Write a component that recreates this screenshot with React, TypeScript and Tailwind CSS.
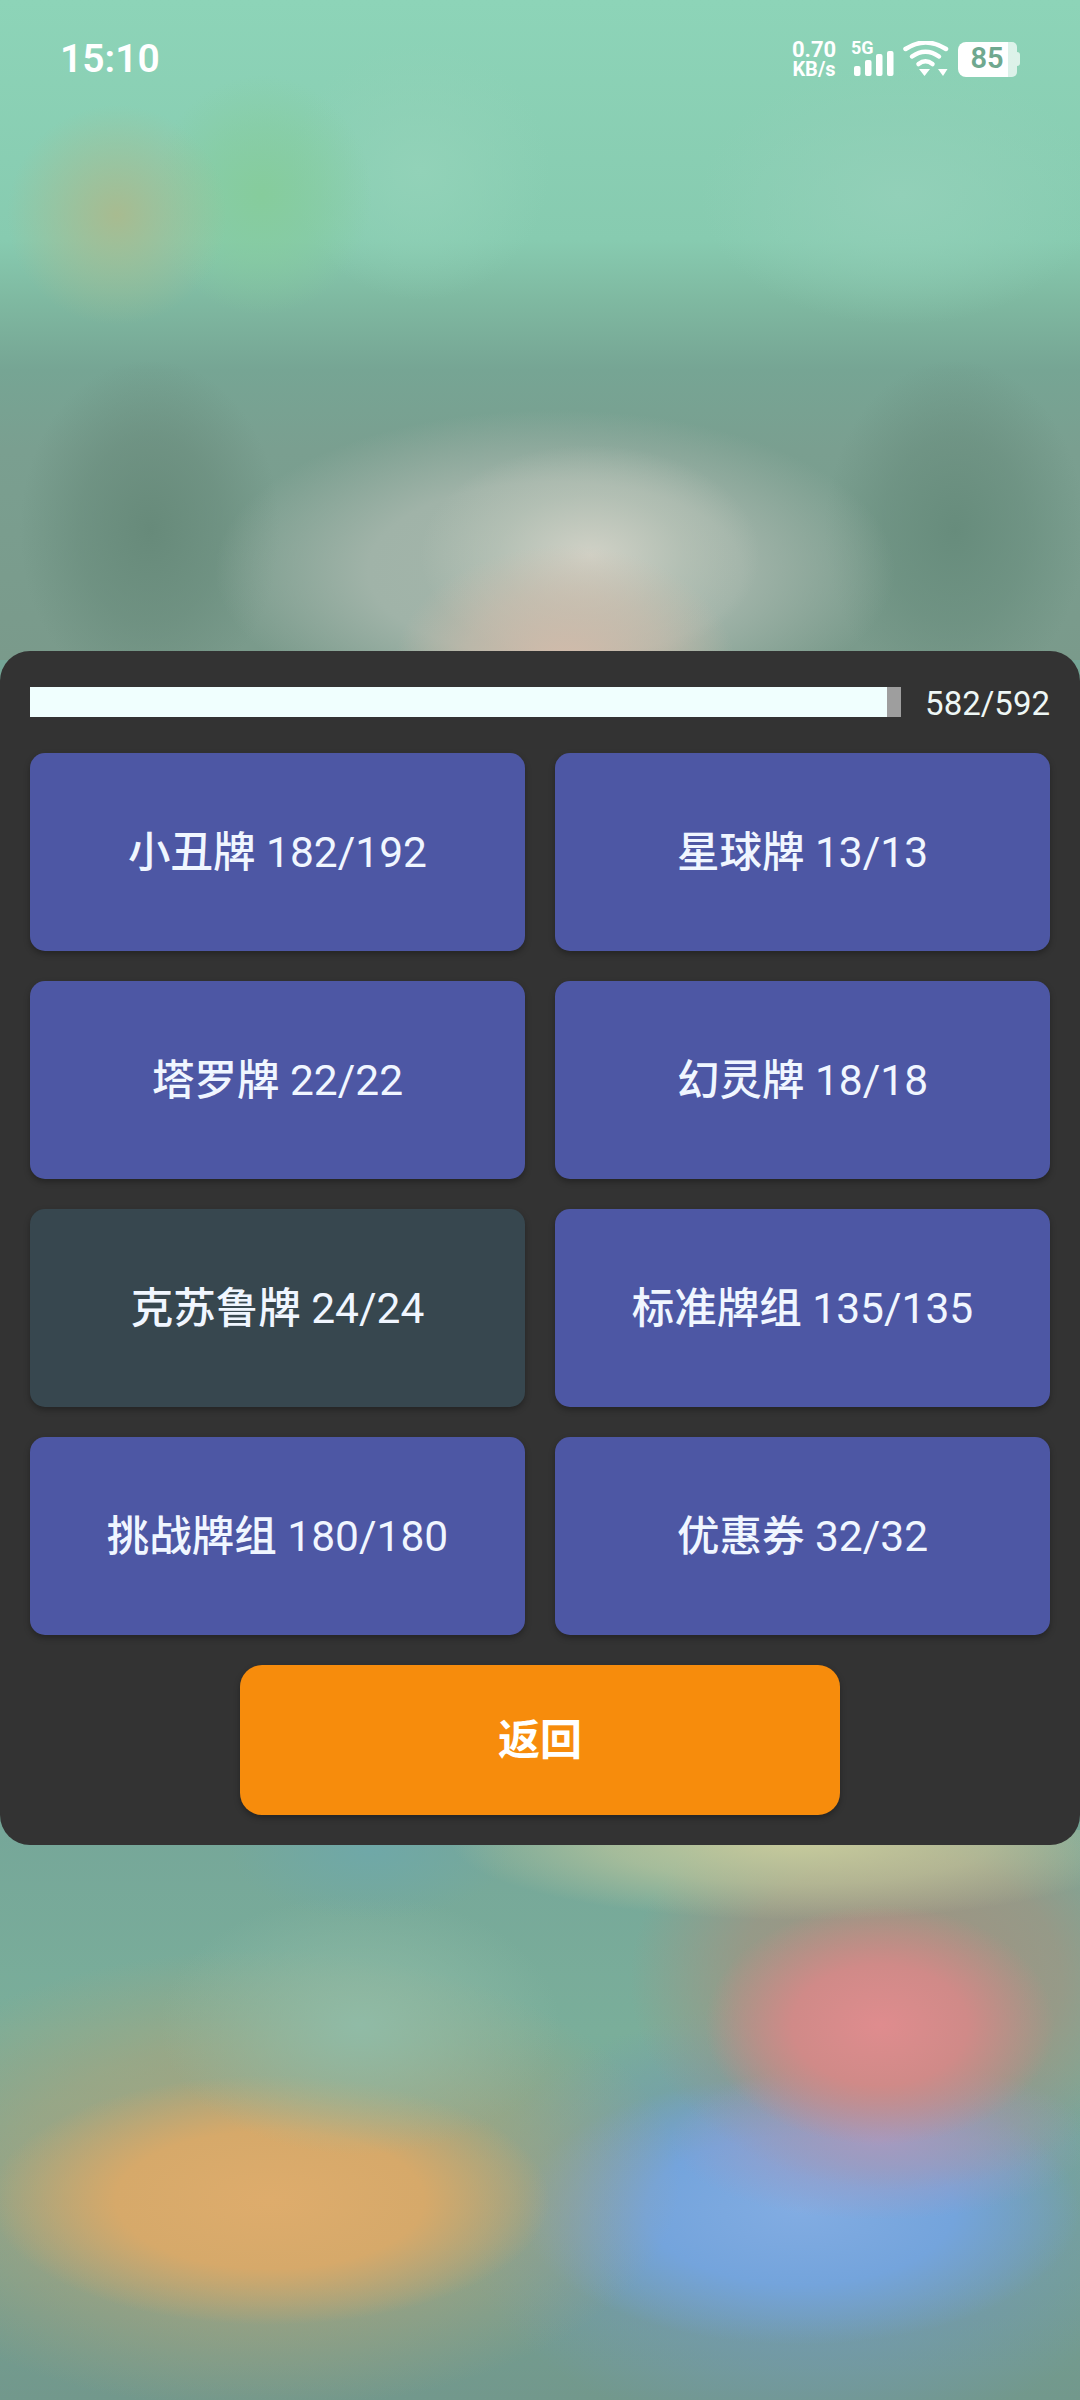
import React from 'react';

const decks = [
  { label: '小丑牌 182/192', dark: false },
  { label: '星球牌 13/13', dark: false },
  { label: '塔罗牌 22/22', dark: false },
  { label: '幻灵牌 18/18', dark: false },
  { label: '克苏鲁牌 24/24', dark: true },
  { label: '标准牌组 135/135', dark: false },
  { label: '挑战牌组 180/180', dark: false },
  { label: '优惠券 32/32', dark: false },
];

const StatusIcons = () => (
  <div className="flex items-center text-white h-[36px]">
    <div className="flex flex-col items-center w-[46px] font-bold">
      <span className="text-[22px] leading-[20px]">0.70</span>
      <span className="text-[20px] leading-[18px]">KB/s</span>
    </div>
    <div className="relative ml-[15px] w-[42px] h-[36px]">
      <span className="absolute -left-[1px] -top-[3px] text-[18px] leading-[20px] font-bold">5G</span>
      <svg className="absolute left-0 top-0" width="42" height="36" viewBox="0 0 42 36" fill="white">
        <rect x="2" y="25" width="6.5" height="10" rx="2" />
        <rect x="13" y="19" width="6.5" height="16" rx="2" />
        <rect x="24" y="13" width="6.5" height="22" rx="2" />
        <rect x="35" y="10" width="6.5" height="25" rx="2" />
      </svg>
    </div>
    <svg className="ml-[9px]" width="46" height="36" viewBox="0 0 46 36" fill="none" stroke="white" strokeWidth="4.5" strokeLinecap="round">
      <path d="M2.5 8 Q22.5 -5 43 8" />
      <path d="M9 15.5 Q22.5 6 36 15.5" />
      <path d="M15.5 23 Q22.5 17.5 29.5 23" />
      <path d="M16 28 H27 L21.5 35 Z" fill="white" stroke="none" />
      <path d="M35 28 H44.5 L40 35 Z" fill="white" stroke="none" />
    </svg>
    <div className="ml-[9px] flex items-center">
      <div className="w-[50px] h-[35px] rounded-l-[8px] bg-white flex items-center justify-center pl-[8px] text-[#6fa88f] text-[29px] font-semibold">
        85
      </div>
      <div className="w-[9px] h-[35px] rounded-r-[5px] bg-white/70" />
      <div className="w-[3px] h-[14px] bg-white/70 rounded-r-sm" />
    </div>
  </div>
);

export default function App() {
  return (
    <div className="relative w-[1080px] h-[2400px] overflow-hidden bg-[#74a596] font-['Roboto','Noto_Sans_CJK_SC',sans-serif]">
      {/* blurred wallpaper, top half and bottom half */}
      <div className="absolute inset-x-0 top-0 h-[660px] bg-[radial-gradient(ellipse_170px_120px_at_565px_665px,#d3bbaa_0%,#d3bbaa80_60%,transparent_100%),radial-gradient(ellipse_170px_110px_at_590px_555px,#d0d1c6_0%,#c0c8bc90_55%,transparent_100%),radial-gradient(ellipse_340px_160px_at_555px_570px,#a5b6ab_0%,#a0b3a8_55%,transparent_100%),radial-gradient(ellipse_130px_170px_at_150px_530px,#678a7a_0%,#678a7a90_55%,transparent_100%),radial-gradient(ellipse_130px_170px_at_955px_530px,#678c7c_0%,#678c7c90_55%,transparent_100%),radial-gradient(ellipse_110px_110px_at_117px_215px,#a8bb90_0%,#a8bb9070_55%,transparent_100%),radial-gradient(ellipse_110px_120px_at_262px_195px,#86cc9c_0%,#86cc9c80_55%,transparent_100%),radial-gradient(ellipse_130px_130px_at_420px_170px,#92d2b8_0%,transparent_100%),radial-gradient(ellipse_200px_130px_at_900px_195px,#92d0b8_0%,transparent_100%),linear-gradient(180deg,#8dd4b8_0px,#87cbb0_240px,#7fb9a1_300px,#76a594_370px,#7a9f90_450px,#7a9a8b_660px)]" />
      <div className="absolute inset-x-0 top-[1830px] bottom-0 bg-[radial-gradient(ellipse_350px_80px_at_800px_10px,#c8cb9c_0%,#c8cb9c90_55%,transparent_100%),radial-gradient(ellipse_140px_70px_at_370px_20px,#6fa8a8_0%,transparent_100%),radial-gradient(ellipse_175px_120px_at_880px_195px,#df8c8e_0%,#d08a88_50%,transparent_100%),radial-gradient(ellipse_210px_80px_at_880px_310px,#a59ac0_0%,transparent_100%),radial-gradient(ellipse_270px_210px_at_900px_150px,#a39280_0%,#a39280b0_60%,transparent_100%),radial-gradient(ellipse_200px_130px_at_360px_195px,#90bba6_0%,transparent_100%),radial-gradient(ellipse_280px_125px_at_270px_370px,#deac6c_0%,#d6a96a_55%,transparent_100%),radial-gradient(ellipse_420px_230px_at_260px_350px,#aea47a_0%,#aea47a90_60%,transparent_100%),radial-gradient(ellipse_280px_135px_at_800px_380px,#82ace2_0%,#74a4dc_55%,transparent_100%),radial-gradient(ellipse_350px_220px_at_810px_390px,#7299b8_0%,#7299b890_60%,transparent_100%),linear-gradient(180deg,#76a799_0px,#7aae9a_200px,#76a294_400px,#72988c_570px)]" />

      <div className="relative flex flex-col h-full">
        <div className="h-[651px] shrink-0">
          <div className="flex items-center justify-between pl-[60px] pr-[60px] pt-[41px]">
            <span className="text-white text-[39px] font-semibold leading-[36px]">15:10</span>
            <StatusIcons />
          </div>
        </div>

        <div className="h-[1194px] bg-[#333333] rounded-[30px] p-[30px] flex flex-col">
          <div className="flex items-center h-[30px] mt-[6px]">
            <div className="w-[872px] h-[30px] bg-[#9e9e9e]">
              <div className="w-[857px] h-full bg-[#f0fffe]" />
            </div>
            <span className="ml-[24px] text-[#eef7f5] text-[33px] leading-[30px] mt-[3px]">582/592</span>
          </div>

          <div className="grid grid-cols-2 gap-[30px] mt-[36px]">
            {decks.map((d) => (
              <button
                key={d.label}
                className={`h-[198px] pt-[2px] rounded-[15px] text-[#f0f6ff] text-[42.5px] font-[450] shadow-[0_3px_6px_rgba(0,0,0,0.3)] ${d.dark ? 'bg-[#37474f]' : 'bg-[#4d57a4]'}`}
              >
                {d.label}
              </button>
            ))}
          </div>

          <button className="mt-[30px] mx-auto w-[600px] h-[150px] rounded-[22px] bg-[#f78c0c] text-white text-[42px] font-bold shadow-[0_3px_6px_rgba(0,0,0,0.3)]">
            返回
          </button>
        </div>
      </div>
    </div>
  );
}
